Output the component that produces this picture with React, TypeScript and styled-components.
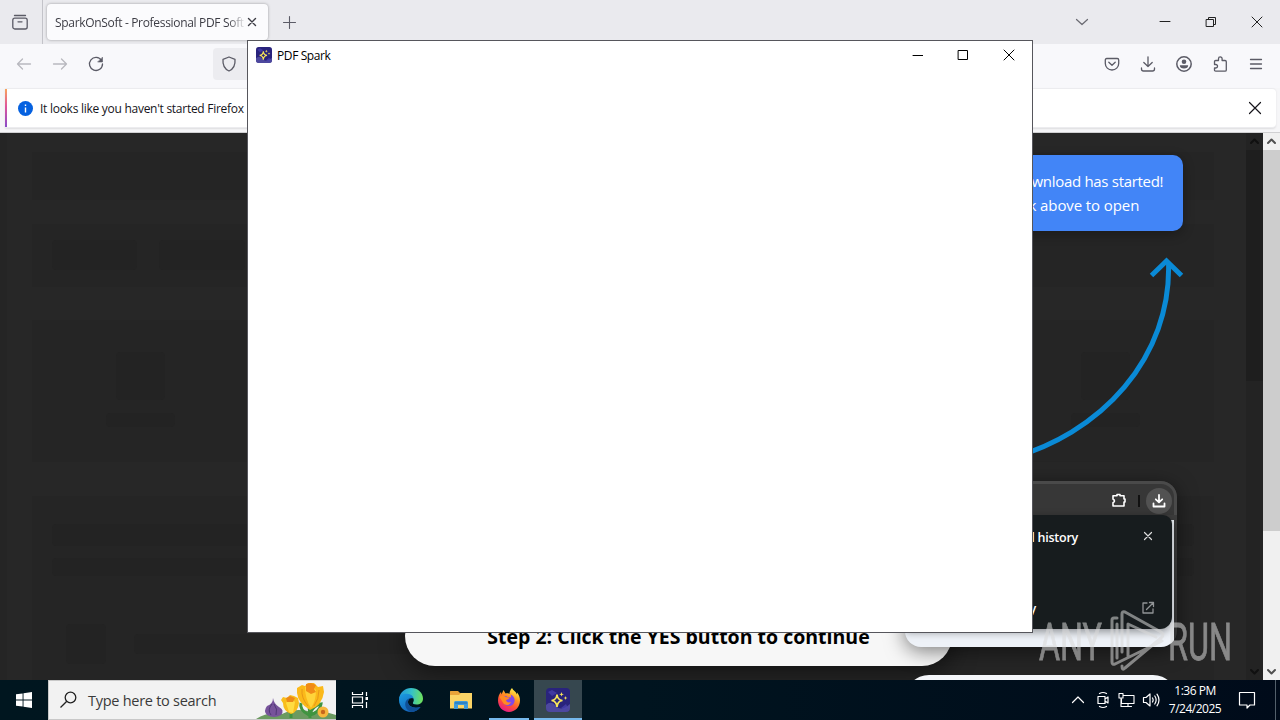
import { FC, ReactNode } from 'react';
import styled, { createGlobalStyle } from 'styled-components';

const GlobalStyle = createGlobalStyle`
    * {
        box-sizing: border-box;
    }

    body {
        margin: 0;
        overflow: hidden;
        font-family: 'Open Sans', 'Noto Sans', sans-serif;
    }

    svg {
        display: block;
        flex-shrink: 0;
    }
`;

const Desktop = styled.div`
    position: relative;
    display: flex;
    flex-direction: column;
    width: 1280px;
    height: 720px;
    overflow: hidden;
`;

/* ---------- browser ---------- */

const TabStrip = styled.div`
    display: flex;
    align-items: center;
    height: 44px;
    background: #eaeaee;
    color: #5b5b66;
`;
const ViewButton = styled.div`
    display: flex;
    align-items: center;
    justify-content: center;
    width: 43px;
    height: 44px;
    padding-right: 3px;
    border-right: 1px solid #c3c3c9;
`;
const Tab = styled.div`
    display: flex;
    align-items: center;
    width: 221px;
    height: 36px;
    margin-left: 4px;
    padding: 0 10px 0 8px;
    border-radius: 4px;
    background: #fbfbfd;
    box-shadow: 0 0 3px rgba(0, 0, 0, 0.35);
`;
const TabTitle = styled.span`
    width: 191px;
    overflow: hidden;
    white-space: nowrap;
    font-size: 12px;
    letter-spacing: -0.32px;
    color: #3c3c44;
    mask-image: linear-gradient(to left, transparent, #000 18px);
`;
const NewTab = styled.div`
    margin-left: 14px;
`;
const WindowButtons = styled.div`
    display: flex;
    align-items: center;
    margin-left: auto;
`;
const WindowButton = styled.div<{ $width?: number }>`
    display: flex;
    align-items: center;
    justify-content: center;
    width: ${({ $width }) => $width || 46}px;
    height: 30px;
    color: #222;
`;
const Toolbar = styled.div`
    display: flex;
    align-items: center;
    height: 44px;
    padding: 0 6px;
    background: #f8f8fb;
    color: #5b5b66;
`;
const ToolButton = styled.div<{ $dim?: boolean }>`
    display: flex;
    align-items: center;
    justify-content: center;
    width: 36px;
    height: 32px;
    margin-top: -4px;
    opacity: ${({ $dim }) => ($dim ? 0.4 : 1)};
`;
const UrlBar = styled.div`
    display: flex;
    align-items: center;
    flex: 1;
    height: 32px;
    margin: -4px 160px 0 99px;
    padding-left: 8px;
    border-radius: 4px;
    background: #ececf0;
`;
const NoticeArea = styled.div`
    height: 45px;
    padding: 0 4px 0 5px;
    background: #f6f6f8;
    border-bottom: 1px solid #d0d0d2;
`;
const Notice = styled.div`
    display: flex;
    align-items: center;
    height: 40px;
    padding: 0 14px 0 13px;
    border: solid #ececef;
    border-width: 1px 0;
    border-radius: 1px 4px 4px 1px;
    background: linear-gradient(#f7a35c, #e0559a 45%, #8a4bc8) 0 0 / 2px 100% no-repeat, #fff;
    box-shadow: 0 1px 2px rgba(0, 0, 0, 0.1);
`;
const NoticeText = styled.span`
    margin: 1px auto 0 7px;
    white-space: nowrap;
    font-size: 12px;
    letter-spacing: -0.27px;
    color: #15141a;
`;
const Viewport = styled.div`
    display: flex;
    height: 547px;
`;

/* ---------- web page ---------- */

const Page = styled.div`
    position: relative;
    display: flex;
    flex: 1;
    overflow: hidden;
    background: #272727;
`;
const PageBody = styled.div`
    display: flex;
    flex-direction: column;
    flex: 1;
    padding: 19px 32px 0 25px;
    border-left: 7px solid #252525;
`;
const Block = styled.div<{ $height: number; $gap: number }>`
    flex-shrink: 0;
    height: ${({ $height }) => $height}px;
    margin-bottom: ${({ $gap }) => $gap}px;
    padding: 16px 20px;
    background: #252525;
`;
const BlockRow = styled.div<{ $spread?: boolean }>`
    display: flex;
    align-items: center;
    gap: 22px;
    justify-content: ${({ $spread }) => ($spread ? 'space-between' : 'flex-start')};
    padding: ${({ $spread }) => ($spread ? '16px 54px' : 0)};
`;
const Tile = styled.div`
    display: flex;
    flex-direction: column;
    align-items: center;
    gap: 13px;
`;
const Bone = styled.div<{ $width?: string; $height: number; $mt?: number }>`
    width: ${({ $width }) => $width || '100%'};
    height: ${({ $height }) => $height}px;
    margin-top: ${({ $mt }) => $mt || 0}px;
    border-radius: 4px;
    background: #232323;
`;
const BoneLine = styled.div`
    display: flex;
    align-items: center;
    gap: 28px;
    margin-top: 48px;
    padding-left: 14px;
`;

const ScrollTrack = styled.div<{ $dark?: boolean }>`
    display: flex;
    flex-direction: column;
    width: 17px;
    background: ${({ $dark }) => ($dark ? '#232323' : '#f0f0f0')};
    color: ${({ $dark }) => ($dark ? '#101010' : '#505050')};
`;
const ScrollArrow = styled.div`
    display: flex;
    align-items: center;
    justify-content: center;
    height: 17px;
`;
const ScrollThumb = styled.div<{ $dark?: boolean; $height: number }>`
    height: ${({ $height }) => $height}px;
    margin-bottom: auto;
    background: ${({ $dark }) => ($dark ? '#1e1e1e' : '#cdcdcd')};
`;

/* floating hints, all laid over the dimmed page */
const Tooltip = styled.div`
    position: absolute;
    top: 22px;
    right: 80px;
    display: flex;
    flex-direction: column;
    align-items: center;
    width: 224px;
    height: 76px;
    padding-top: 14px;
    border-radius: 10px;
    background: #4285f7;
    box-shadow: 0 3px 12px rgba(0, 0, 0, 0.3);
    color: #fff;
    white-space: nowrap;
    font-size: 15px;
    line-height: 24px;
    letter-spacing: -0.3px;
`;
const TooltipHint = styled.span`
    letter-spacing: -0.1px;
    padding-left: 2px;
`;
const Arrow = styled.svg`
    position: absolute;
    top: 107px;
    left: 983px;
`;
const StepPill = styled.div`
    position: absolute;
    left: 405px;
    bottom: 14px;
    width: 547px;
    height: 60px;
    padding-top: 17px;
    border-radius: 30px;
    background: #f7f7f7;
    box-shadow: 0 6px 24px rgba(0, 0, 0, 0.5);
    text-align: center;
    white-space: nowrap;
    font-size: 19.5px;
    font-weight: 700;
    line-height: 28px;
    color: #000;
`;
const PreviewCard = styled.div`
    position: absolute;
    left: 905px;
    top: 348px;
    display: flex;
    flex-direction: column;
    width: 272px;
    height: 166px;
    border-radius: 16px;
    background: linear-gradient(#3c3c3c, #3c3c3c) 0 0 / 100% 39px no-repeat,
        linear-gradient(#3c3c3c, #333) 100% 0 / 3px 100% no-repeat, #eef2f8;
    box-shadow: 0 4px 20px rgba(0, 0, 0, 0.5);
    overflow: hidden;
`;
const PreviewBar = styled.div`
    display: flex;
    align-items: center;
    justify-content: flex-end;
    height: 34px;
    padding: 2px 5px 0 0;
    border-top: 3px solid #4a4a4a;
    border-right: 3px solid #4a4a4a;
    border-radius: 0 16px 0 0;
    background: #373737;
    color: #fff;
`;
const PreviewDivider = styled.div`
    width: 2px;
    height: 12px;
    margin: 0 6px 0 12px;
    background: #111;
`;
const PreviewDownload = styled.div`
    display: flex;
    align-items: center;
    justify-content: center;
    width: 26px;
    height: 26px;
    margin-right: -3px;
    border-radius: 50%;
    background: #525252;
`;
const PreviewPanel = styled.div`
    display: flex;
    flex-direction: column;
    justify-content: space-between;
    width: 267px;
    height: 114px;
    padding: 13px 17px 12px 20px;
    border-radius: 0 9px 12px 0;
    background: #171c1e;
    color: #fff;
    box-shadow: 0 3px 8px rgba(0, 0, 0, 0.4);
`;
const PreviewLine = styled.div`
    display: flex;
    align-items: center;
    justify-content: space-between;
    height: 18px;
    font-size: 12.5px;
    font-weight: 600;
    letter-spacing: -0.25px;
`;
const PreviewLabel = styled.span<{ $end: number }>`
    display: flex;
    justify-content: flex-end;
    width: ${({ $end }) => $end}px;
    white-space: nowrap;
`;
const NextCard = styled.div`
    position: absolute;
    left: 905px;
    top: 542px;
    width: 272px;
    height: 40px;
    border-radius: 24px 24px 0 0;
    background: #f4f6fa;
`;

/* ---------- application window ---------- */

const AppWindow = styled.div`
    position: absolute;
    left: 247px;
    top: 40px;
    width: 786px;
    height: 593px;
    border: 1px solid #56565c;
    background: #fff;
`;
const TitleBar = styled.div`
    display: flex;
    align-items: center;
    height: 28px;
    padding-left: 8px;
`;
const Title = styled.span`
    margin: 1px auto 0 5px;
    font-size: 12px;
    letter-spacing: -0.4px;
    color: #000;
`;

/* ---------- taskbar ---------- */

const Taskbar = styled.div`
    display: flex;
    height: 40px;
    background: linear-gradient(90deg, #00161f, #00141f 50%, #000b1a);
    color: #fff;
`;
const TaskButton = styled.div<{ $width?: number; $line?: number; $active?: boolean }>`
    display: flex;
    align-items: center;
    justify-content: center;
    width: ${({ $width }) => $width || 48}px;
    height: 40px;
    background: linear-gradient(#76b9ed, #76b9ed) 50% 100% / ${({ $line }) => $line || 0}px 2px no-repeat,
        ${({ $active }) => ($active ? '#36474f' : 'transparent')};
`;
const SearchBox = styled.div`
    display: flex;
    align-items: center;
    width: 288px;
    padding-left: 11px;
    border: 1px solid #c8c8c8;
    border-right: 0;
    background: #f2f2f2;
    color: #222;
`;
const SearchText = styled.span`
    margin: 0 auto 0 10px;
    font-size: 14.5px;
    letter-spacing: -0.27px;
    color: #3a3a3a;
    white-space: nowrap;
`;
const Tray = styled.div`
    display: flex;
    align-items: center;
    gap: 7px;
    margin-left: auto;
`;
const Clock = styled.div`
    display: flex;
    flex-direction: column;
    align-items: center;
    width: 56px;
    font-size: 12px;
    line-height: 18px;
    letter-spacing: -0.5px;
    white-space: nowrap;
`;
const ShowDesktop = styled.div`
    width: 5px;
    height: 40px;
    margin-left: 4px;
    border-left: 1px solid #53606b;
`;

const Watermark = styled.svg`
    position: absolute;
    left: 1036px;
    top: 600px;
    opacity: 0.55;
    overflow: visible;
`;

type IconProps = { size?: number; w?: number; children: ReactNode };

const Icon: FC<IconProps> = ({ size = 16, w = 1.3, children }) => (
    <svg
        width={size}
        height={size}
        viewBox={`0 0 ${size} ${size}`}
        fill="none"
        stroke="currentColor"
        strokeWidth={w}
        strokeLinecap="round"
        strokeLinejoin="round"
    >
        {children}
    </svg>
);

const SparkIcon: FC<{ size: number }> = ({ size }) => (
    <svg width={size} height={size} viewBox="0 0 24 24">
        <rect width="24" height="24" rx="4" fill="#29237c" />
        <path d="M0 17Q5 12 10 18T24 16V20Q24 24 20 24H4Q0 24 0 20Z" fill="#5956aa" opacity=".75" />
        <path d="M2 4l4-2 5 3-5 3zM15 20l5-4 2 4-3 2z" fill="#4a43b0" opacity=".7" />
        <path d="M11 6.500Q11.500 12 16.500 12.500Q11.500 13 11 19Q10.500 13 5.500 12.500Q10.500 12 11 6.500Z" fill="#29237c" stroke="#f7e55a" strokeWidth="1.7" />
        <path d="M15.500 4l.6 1.700 1.700.6-1.700.6-.6 1.700-.6-1.700-1.700-.6 1.700-.6zM19.500 8l.5 1.500 1.500.5-1.500.5-.5 1.500-.5-1.500-1.500-.5 1.500-.5z" fill="#f7e55a" />
    </svg>
);

const EdgeIcon = () => (
    <svg width="24" height="24" viewBox="0 0 24 24">
        <defs>
            <linearGradient id="edgeTop" x1="0" y1=".4" x2="1" y2=".5">
                <stop offset="0" stopColor="#2196dc" />
                <stop offset=".5" stopColor="#35c1c9" />
                <stop offset="1" stopColor="#6ee25c" />
            </linearGradient>
            <linearGradient id="edgeLow" x1="0" y1="0" x2=".6" y2="1">
                <stop offset="0" stopColor="#1b9de2" />
                <stop offset="1" stopColor="#1461b8" />
            </linearGradient>
        </defs>
        <path d="M0 11C1 4 6 0 12 0c7 0 12 5 12 10.500 0 4-3 6-6.500 6-3 0-4-1-3.500-2 1.500-2 1-5-2-6C8 7 3 7 0 11Z" fill="url(#edgeTop)" />
        <path d="M0 12C0 7 4 5.500 8 5.700c4 .2 6.300 2.300 6.500 5C13 9.500 9.500 10 9 13.500c-.4 4.500 5 7.500 12.500 5.500C19 22.500 15.500 24 12 24 5 24 0 18.500 0 12Z" fill="url(#edgeLow)" />
        <path d="M9 13.500c-.4 4.500 5 7.500 12.500 5.500C19 22.500 15.500 24 12 24 7 22 5 17 7 13c1-2 4-3.500 6.500-2.500C10.500 10 9.300 11.500 9 13.500Z" fill="#0f4f96" />
    </svg>
);

const FolderIcon = () => (
    <svg width="22" height="20" viewBox="0 0 22 20">
        <path d="M0 1.500Q0 1 .5 1H8l2 2H21.500Q22 3 22 3.500V7H0Z" fill="#e8a33a" />
        <path d="M0 5H9l2-2H22V18.500H0Z" fill="#fbd466" />
        <path d="M4 19V12.500Q4 11 5.500 11H16.500Q18 11 18 12.500V19H14V15H8V19Z" fill="#3f9bdc" />
        <path d="M5 12H17V14H5Z" fill="#2f83c5" />
    </svg>
);

const FirefoxIcon = () => (
    <svg width="24" height="24" viewBox="0 0 24 24">
        <defs>
            <linearGradient id="fox" x1=".8" y1=".05" x2=".3" y2="1">
                <stop offset="0" stopColor="#fff44f" />
                <stop offset=".35" stopColor="#ff9a22" />
                <stop offset=".65" stopColor="#ff4f36" />
                <stop offset="1" stopColor="#e3198c" />
            </linearGradient>
        </defs>
        <path d="M15 0c1 2.500 4 3.500 5 6.500V4.500c2 2 3 5 3 8C23 19 18 24 12 24S1 19 1 12.500C1 9 2 6 4 4l.5 2.500L6.500 2l2 3.500c2-.5 3.500 0 4 .5C12.500 3.500 13.500 1.500 15 0Z" fill="url(#fox)" />
        <path d="M6.500 8.500c1.500-1 3-.5 4 .5l3 .5c1-.8.5-2 0-3 3.500 1.500 4.500 4 4 7-.5 2.500-2.500 4.500-5.500 4.500C8.500 18 6 15.500 6.500 12Z" fill="#8048e8" />
        <path d="M2.500 9c2-2 4-2 5.500-.5 1 1 3 .8 4.500 1-.5 2-2.500 2-3.500 2.500.5 2.500 3 3 5 2-1 3-5 4-7.500 1.500Z" fill="#ff8b22" />
    </svg>
);

const Flowers = () => (
    <svg width="80" height="38" viewBox="0 0 80 38">
        <path d="M0 38Q12 30 26 33Q40 26 56 31Q68 29 80 34V38Z" fill="#6b9a60" />
        <path d="M35 37L35 26M54 37L53 24M54 32Q58 24 65 23Q64 31 54 34M53 34Q43 29 45 22" stroke="#3f9440" strokeWidth="3" fill="none" />
        <path d="M17 17Q18 23 23 26Q29 29 25 34Q18 38 11 34Q7 30 11 25Q17 23 17 17Z" fill="#77539b" />
        <path d="M16 23Q11 29 15 34M18 23Q22 28 20 34" stroke="#4f3775" fill="none" />
        <path d="M25 19l2-3 4 1 3-3 4 1 4 2 1 5q-1 9-8 11-8-3-8-11Z" fill="#f9bd1c" />
        <path d="M34 16l5 5-2 11-4-1-3-9Z" fill="#ffdc42" />
        <path d="M30 17l4-2 5 2-2 4h-6Z" fill="#ec8a18" />
        <path d="M41 7l5-3 3 1 3-3 6 0 4 4 5-1 1 6q-2 14-14 18-12-7-13-17Z" fill="#fbb91a" />
        <path d="M49 6l5-3 6 6q0 11-5 18-6-9-6-21Z" fill="#ffd43a" />
        <path d="M50 3l5-1 5 2-2 4 2 3-5 2-5-3Z" fill="#f08b18" />
        <path d="M46 8Q45 17 52 25M63 9Q63 18 58 25" stroke="#e89817" fill="none" />
        <circle cx="67" cy="31" r="5.500" fill="#f6b63d" />
        <circle cx="67" cy="31" r="2.200" fill="#c7661d" />
    </svg>
);

const Scrollbar: FC<{ dark?: boolean; thumb: number }> = ({ dark, thumb }) => (
    <ScrollTrack $dark={dark}>
        <ScrollArrow>
            <Icon size={9} w={2}>
                <path d="M1 6L4.500 2.500L8 6" />
            </Icon>
        </ScrollArrow>
        <ScrollThumb $dark={dark} $height={thumb} />
        <ScrollArrow>
            <Icon size={9} w={2}>
                <path d="M1 3L4.500 6.500L8 3" />
            </Icon>
        </ScrollArrow>
    </ScrollTrack>
);

const SkeletonTile = () => (
    <Tile>
        <Bone $width="49px" $height={48} />
        <Bone $width="69px" $height={14} />
    </Tile>
);

const Browser: FC = () => (
    <>
        <TabStrip>
            <ViewButton>
                <Icon>
                    <path d="M2.500 1.500H13.500" />
                    <rect x=".8" y="4.200" width="14.400" height="10.800" rx="2" />
                    <path d="M6 7.800H10" />
                </Icon>
            </ViewButton>
            <Tab>
                <TabTitle>SparkOnSoft - Professional PDF Soft</TabTitle>
                <Icon size={12} w={1.4}>
                    <path d="M2.500 2.500L9.500 9.500M9.500 2.500L2.500 9.500" stroke="#3c3c44" />
                </Icon>
            </Tab>
            <NewTab>
                <Icon size={14} w={1.1}>
                    <path d="M7.500 1.500V13.500M1.500 7.500H13.500" />
                </Icon>
            </NewTab>
            <WindowButtons>
                <WindowButton $width={120}>
                    <Icon size={14} w={1.2}>
                        <path d="M1.500 4.500L7 9.500L12.500 4.500" stroke="#6a6a72" />
                    </Icon>
                </WindowButton>
                <WindowButton>
                    <Icon size={12} w={1}>
                        <path d="M1 5.500H11" />
                    </Icon>
                </WindowButton>
                <WindowButton>
                    <Icon size={12} w={1}>
                        <path d="M1.500 3.500H8.500V10.500H1.500ZM3.500 3V1.500H10.500V8.500H9" />
                    </Icon>
                </WindowButton>
                <WindowButton>
                    <Icon size={12} w={1}>
                        <path d="M1 1L11 11M11 1L1 11" />
                    </Icon>
                </WindowButton>
            </WindowButtons>
        </TabStrip>
        <Toolbar>
            <ToolButton $dim>
                <Icon>
                    <path d="M14.500 8H1.500M6.500 3L1.500 8L6.500 13" />
                </Icon>
            </ToolButton>
            <ToolButton $dim>
                <Icon>
                    <path d="M1.500 8H14.500M9.500 3L14.500 8L9.500 13" />
                </Icon>
            </ToolButton>
            <ToolButton>
                <Icon>
                    <path d="M13.500 4.500A6.500 6.500 0 1 0 14.500 8" />
                    <path d="M14.500 1.500V6H10Z" fill="currentColor" strokeWidth=".6" />
                </Icon>
            </ToolButton>
            <UrlBar>
                <Icon>
                    <path d="M8 1L14 3.300C14.500 9 12.500 13 8 15C3.500 13 1.500 9 2 3.300Z" />
                </Icon>
            </UrlBar>
            <ToolButton>
                <Icon>
                    <path d="M2.800 2.500H13.200Q14.700 2.500 14.700 4V7.500A6.700 6.500 0 0 1 1.300 7.500V4Q1.300 2.500 2.800 2.500Z" />
                    <path d="M4.800 6.200L8 9.200L11.200 6.200" />
                </Icon>
            </ToolButton>
            <ToolButton>
                <Icon>
                    <path d="M8 .8V10.500M3.800 6.500L8 10.500L12.200 6.500M1.500 12V13Q1.500 15 3.500 15H12.500Q14.500 15 14.500 13V12" />
                </Icon>
            </ToolButton>
            <ToolButton>
                <Icon w={1.5}>
                    <circle cx="8" cy="8" r="7.200" />
                    <circle cx="8" cy="5.700" r="2.300" fill="currentColor" stroke="none" />
                    <path d="M3.800 9.300H12.200Q12 12.500 8 12.600Q4 12.500 3.800 9.300Z" fill="currentColor" stroke="none" />
                </Icon>
            </ToolButton>
            <ToolButton>
                <Icon>
                    <path d="M2.500 7V5.500Q2.500 4.500 3.700 4.500H6.500V2.700A1.800 1.800 0 0 1 10.100 2.700V4.500H13Q14.300 4.500 14.300 5.700V14Q14.300 15.200 13 15.200H3.700Q2.500 15.200 2.500 14V12H3.800A1.700 1.700 0 0 0 3.800 8.500H2.500Z" />
                </Icon>
            </ToolButton>
            <ToolButton>
                <Icon>
                    <path d="M2.500 3.500H13.500M2.500 8H13.500M2.500 12.500H13.500" />
                </Icon>
            </ToolButton>
        </Toolbar>
        <NoticeArea>
            <Notice>
                <svg width="15" height="15" viewBox="0 0 15 15">
                    <circle cx="7.500" cy="7.500" r="7.500" fill="#0561e0" />
                    <path d="M7.500 6.500V11.500M7.500 3.500V5" stroke="#fff" strokeWidth="1.400" />
                </svg>
                <NoticeText>It looks like you haven't started Firefox</NoticeText>
                <Icon size={14} w={1.2}>
                    <path d="M1.500 1.500L12.500 12.500M12.500 1.500L1.500 12.500" stroke="#15141a" />
                </Icon>
            </Notice>
        </NoticeArea>
        <Viewport>
            <Page>
                <PageBody>
                    <Block $height={48} $gap={24} />
                    <Block $height={63} $gap={33}>
                        <BlockRow>
                            <Bone $width="85px" $height={30} />
                            <Bone $width="86px" $height={30} />
                        </BlockRow>
                    </Block>
                    <Block $height={142} $gap={34}>
                        <BlockRow $spread>
                            <SkeletonTile />
                            <SkeletonTile />
                        </BlockRow>
                    </Block>
                    <Block $height={200} $gap={0}>
                        <Bone $height={22} $mt={12} />
                        <Bone $height={18} $mt={12} />
                        <BoneLine>
                            <Bone $width="40px" $height={40} />
                            <Bone $width="500px" $height={20} />
                        </BoneLine>
                    </Block>
                </PageBody>
                <Scrollbar dark thumb={231} />
                <Tooltip>
                    <span>Your download has started!</span>
                    <TooltipHint>Click above to open</TooltipHint>
                </Tooltip>
                <Arrow width="220" height="230" viewBox="0 0 220 230" fill="none" stroke="#0a8ad6" strokeWidth="5">
                    <path d="M20 220C120 196 189 115 185.500 22" />
                    <path d="M168.500 35.500L183.500 21L198.500 35.500" />
                </Arrow>
                <StepPill>Step 2: Click the YES button to continue</StepPill>
                <PreviewCard>
                    <PreviewBar>
                        <Icon size={15} w={1.6}>
                            <path d="M2 2.800H6V1.500H9V2.800H13V6H14V9H13V13H2V9.800Q5 8 2 6Z" />
                        </Icon>
                        <PreviewDivider />
                        <PreviewDownload>
                            <Icon size={14} w={1.8}>
                                <path d="M7 1V8M3.800 5.300L7 8.300L10.200 5.300M1.500 9.500V12.500H12.500V9.500" />
                            </Icon>
                        </PreviewDownload>
                    </PreviewBar>
                    <PreviewPanel>
                        <PreviewLine>
                            <PreviewLabel $end={153}>Recent download history</PreviewLabel>
                            <Icon size={14} w={1.2}>
                                <path d="M3.500 2.500L10.500 9.500M10.500 2.500L3.500 9.500" stroke="#ddd" />
                            </Icon>
                        </PreviewLine>
                        <PreviewLine>
                            <PreviewLabel $end={111}>Full download history</PreviewLabel>
                            <Icon size={14} w={1.3}>
                                <path d="M6 2H2V12H12V8M8.500 1.500H12.500V5.500M12 2L5.500 8.500" stroke="#919496" />
                            </Icon>
                        </PreviewLine>
                    </PreviewPanel>
                </PreviewCard>
                <NextCard />
            </Page>
            <Scrollbar thumb={381} />
        </Viewport>
    </>
);

const App: FC = () => (
    <Desktop>
        <GlobalStyle />
        <Browser />
        <Taskbar>
            <TaskButton>
                <svg width="16" height="16" viewBox="0 0 16 16" fill="#fff">
                    <path d="M0 2.300L6.600 1.400V7.500H0ZM7.500 1.200L16 0V7.500H7.500ZM0 8.500H6.600V14.600L0 13.700ZM7.500 8.500H16V16L7.500 14.800Z" />
                </svg>
            </TaskButton>
            <SearchBox>
                <svg width="18" height="18" viewBox="0 0 18 18" fill="none" stroke="#222" strokeWidth="1.300">
                    <circle cx="10.500" cy="6.500" r="5.300" />
                    <path d="M6.800 10.300L.5 16.500" />
                </svg>
                <SearchText>Type here to search</SearchText>
                <Flowers />
            </SearchBox>
            <TaskButton>
                <svg width="18" height="18" viewBox="0 0 18 18" fill="none" stroke="#fff" strokeWidth="1.200">
                    <path d="M1.500 1V3.500H11.500V1M1.500 6H11.500V12H1.500ZM1.500 17V14.500H11.500V17M15.500 1V5M15.500 11V17" />
                    <path d="M14.500 6H17V9H14.500Z" fill="#fff" stroke="none" />
                </svg>
            </TaskButton>
            <TaskButton $width={54}>
                <EdgeIcon />
            </TaskButton>
            <TaskButton $width={46}>
                <FolderIcon />
            </TaskButton>
            <TaskButton $width={50} $line={40}>
                <FirefoxIcon />
            </TaskButton>
            <TaskButton $active $line={48}>
                <SparkIcon size={24} />
            </TaskButton>
            <Tray>
                <Icon size={16} w={1.2}>
                    <path d="M3.500 10.500L9 5L14.500 10.500" />
                </Icon>
                <Icon size={18} w={1.2}>
                    <path d="M7.500 2.500Q11 .5 14.500 2.500M7.500 15.500Q11 17.500 14.500 15.500M6 5.500H13V12.500H6ZM13 8L16 6V12L13 10Z" />
                </Icon>
                <Icon size={18} w={1.1}>
                    <path d="M6.500 4.500H17V12.500H4.500V8M11 12.500V15.500M7.500 15.500H14.500M2 2.500H6V7H2ZM4 7V15.500H7.500" />
                </Icon>
                <Icon size={18} w={1.2}>
                    <path d="M1.500 6.500H4L8 3V15L4 11.500H1.500ZM10.500 7Q11.800 9 10.500 11M12.800 5Q15.500 9 12.800 13M15 3.200Q19 9 15 14.800" />
                </Icon>
                <Clock>
                    <span>1:36 PM</span>
                    <span>7/24/2025</span>
                </Clock>
                <Icon size={34} w={1.2}>
                    <path d="M9.500 9.500H24.500V22H20L17 25V22H9.500Z" />
                </Icon>
                <ShowDesktop />
            </Tray>
        </Taskbar>
        <AppWindow>
            <TitleBar>
                <SparkIcon size={16} />
                <Title>PDF Spark</Title>
                <WindowButton>
                    <Icon size={12} w={1}>
                        <path d="M2 6.500H12" stroke="#000" />
                    </Icon>
                </WindowButton>
                <WindowButton>
                    <Icon size={12} w={1}>
                        <path d="M1.500 1.500H10.500V10.500H1.500Z" stroke="#000" />
                    </Icon>
                </WindowButton>
                <WindowButton>
                    <Icon size={12} w={1}>
                        <path d="M1 1L11 11M11 1L1 11" stroke="#000" />
                    </Icon>
                </WindowButton>
            </TitleBar>
        </AppWindow>
        <Watermark width="200" height="80" viewBox="0 0 200 80" fill="#d9d9d9" stroke="#d9d9d9" strokeWidth="0.8">
            <text x="3" y="60" fontFamily="Roboto" fontSize="52" textLength="63" lengthAdjust="spacingAndGlyphs">ANY</text>
            <text x="132" y="60" fontFamily="Roboto" fontSize="52" textLength="64" lengthAdjust="spacingAndGlyphs">RUN</text>
            <path
                d="M81 18H78Q76 18 76 20V62Q76 65 79 64L126 41M81 24V58M86 52V14Q86 11 89 12L125 32Q129 35 125 38L89 68Q86 71 86 66M92 56V24L120 37"
                fill="none"
                strokeWidth="3"
                strokeLinejoin="round"
                strokeLinecap="round"
            />
        </Watermark>
    </Desktop>
);

export default App;
